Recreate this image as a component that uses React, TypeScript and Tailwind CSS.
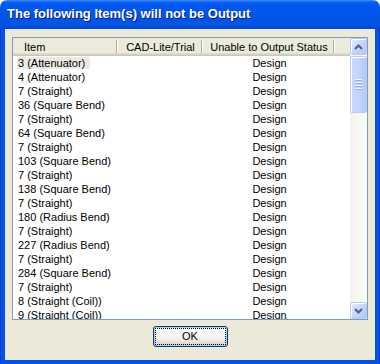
import React from 'react'

const ROWS = [
  '3 (Attenuator)',
  '4 (Attenuator)',
  '7 (Straight)',
  '36 (Square Bend)',
  '7 (Straight)',
  '64 (Square Bend)',
  '7 (Straight)',
  '103 (Square Bend)',
  '7 (Straight)',
  '138 (Square Bend)',
  '7 (Straight)',
  '180 (Radius Bend)',
  '7 (Straight)',
  '227 (Radius Bend)',
  '7 (Straight)',
  '284 (Square Bend)',
  '7 (Straight)',
  '8 (Straight (Coil))',
  '9 (Straight (Coil))',
]

function HeaderCell({ label, width, align }: { label: string; width: string; align: 'left' | 'center' }) {
  return (
    <div className={`${width} h-full flex items-center`}>
      <span className={align === 'left' ? 'flex-1 pl-[11px]' : 'flex-1 text-center pl-[2px]'}>{label}</span>
      <span className="w-[2px] h-[13px] border-l border-[#ACA899] border-r border-r-white mb-[2px]" />
    </div>
  )
}

function Chevron({ down }: { down?: boolean }) {
  return (
    <svg width="9" height="6" viewBox="0 0 9 6" className={down ? 'rotate-180' : ''}>
      <path d="M1 5 L4.5 1.5 L8 5" fill="none" stroke="#4D6185" strokeWidth="2" />
    </svg>
  )
}

function ScrollButton({ down }: { down?: boolean }) {
  return (
    <div className="h-[17px] w-[17px] flex items-center justify-center rounded-[2px] border border-[#B7C9F5] bg-[linear-gradient(135deg,#E3EBFE,#C3D4FC_55%,#B1C6F7)] shadow-[inset_1px_1px_0_#FFFFFF]">
      <Chevron down={down} />
    </div>
  )
}

export default function App() {
  return (
    <div className="w-[380px] h-[364px] flex flex-col font-['Liberation_Sans',Arial,sans-serif] text-[11px] text-black">
      {/* Title bar */}
      <div className="h-[29px] shrink-0 rounded-t-[7px] flex items-center pl-[7px] pb-[1px] bg-[linear-gradient(to_bottom,#3D8CFF_0%,#0A5EF0_8%,#0058EE_18%,#0056EB_50%,#0054E3_85%,#0045D2_100%)]">
        <span className="text-white font-bold text-[13px] [text-shadow:1px_1px_0_#0A1883]">
          The following Item(s) will not be Output
        </span>
      </div>

      {/* Frame */}
      <div className="flex-1 flex flex-col px-[4px] pb-[4px] bg-[#0054E3] border-x border-b border-[#0831D9]">
        <div className="flex-1 flex flex-col items-center bg-[#ECE9D8] px-[7px] pt-[8px] pb-[13px]">
          {/* List view */}
          <div className="w-[356px] h-[283px] shrink-0 flex border border-[#7F9DB9] bg-white">
            <div className="flex-1 flex flex-col overflow-hidden">
              <div className="h-[18px] shrink-0 flex bg-[#EBEADB] shadow-[inset_0_-1px_0_#CBC7B8,inset_0_-2px_0_#D6D2C2,inset_0_-3px_0_#E2DECD]">
                <HeaderCell label="Item" width="w-[105px]" align="left" />
                <HeaderCell label="CAD-Lite/Trial" width="w-[85px]" align="center" />
                <HeaderCell label="Unable to Output Status" width="w-[132px]" align="center" />
              </div>
              <div className="flex flex-col">
                {ROWS.map((r, i) => (
                  <div key={i} className="h-[14px] shrink-0 flex items-center leading-[13px]">
                    <div className="w-[105px] pl-[4px]">
                      <span className={i === 0 ? 'inline-block bg-[#ECEBE3] pl-[1px] pr-[5px] h-[12px]' : 'inline-block pl-[1px]'}>
                        {r}
                      </span>
                    </div>
                    <div className="w-[85px]" />
                    <div className="w-[132px] text-center pl-[1px]">Design</div>
                  </div>
                ))}
              </div>
            </div>

            {/* Scrollbar */}
            <div className="w-[17px] flex flex-col bg-[linear-gradient(to_right,#F3F1EC,#FEFEFB)]">
              <ScrollButton />
              <div className="h-[57px] w-[17px] mt-[1px] flex flex-col items-center justify-center gap-[1px] rounded-[2px] border border-[#B7C9F5] bg-[linear-gradient(to_right,#C9D8FC,#C4D5FD_50%,#B5C9F7)] shadow-[inset_1px_1px_0_#FFFFFF]">
                <span className="w-[7px] h-[2px] border-t border-[#EEF4FE] bg-[#8CB0F8]" />
                <span className="w-[7px] h-[2px] border-t border-[#EEF4FE] bg-[#8CB0F8]" />
                <span className="w-[7px] h-[2px] border-t border-[#EEF4FE] bg-[#8CB0F8]" />
                <span className="w-[7px] h-[2px] border-t border-[#EEF4FE] bg-[#8CB0F8]" />
              </div>
              <div className="flex-1" />
              <ScrollButton down />
            </div>
          </div>

          {/* OK button */}
          <div className="mt-[6px] w-[75px] h-[21px] shrink-0 rounded-[3px] border border-[#003C74] p-[1px] bg-[linear-gradient(to_bottom,#FFFFFF,#F3F2EE_60%,#D6D0C5)] shadow-[inset_0_0_0_1px_#B5CCF4]">
            <div className="h-full flex items-center justify-center border border-dotted border-black">
              OK
            </div>
          </div>
        </div>
      </div>
    </div>
  )
}
